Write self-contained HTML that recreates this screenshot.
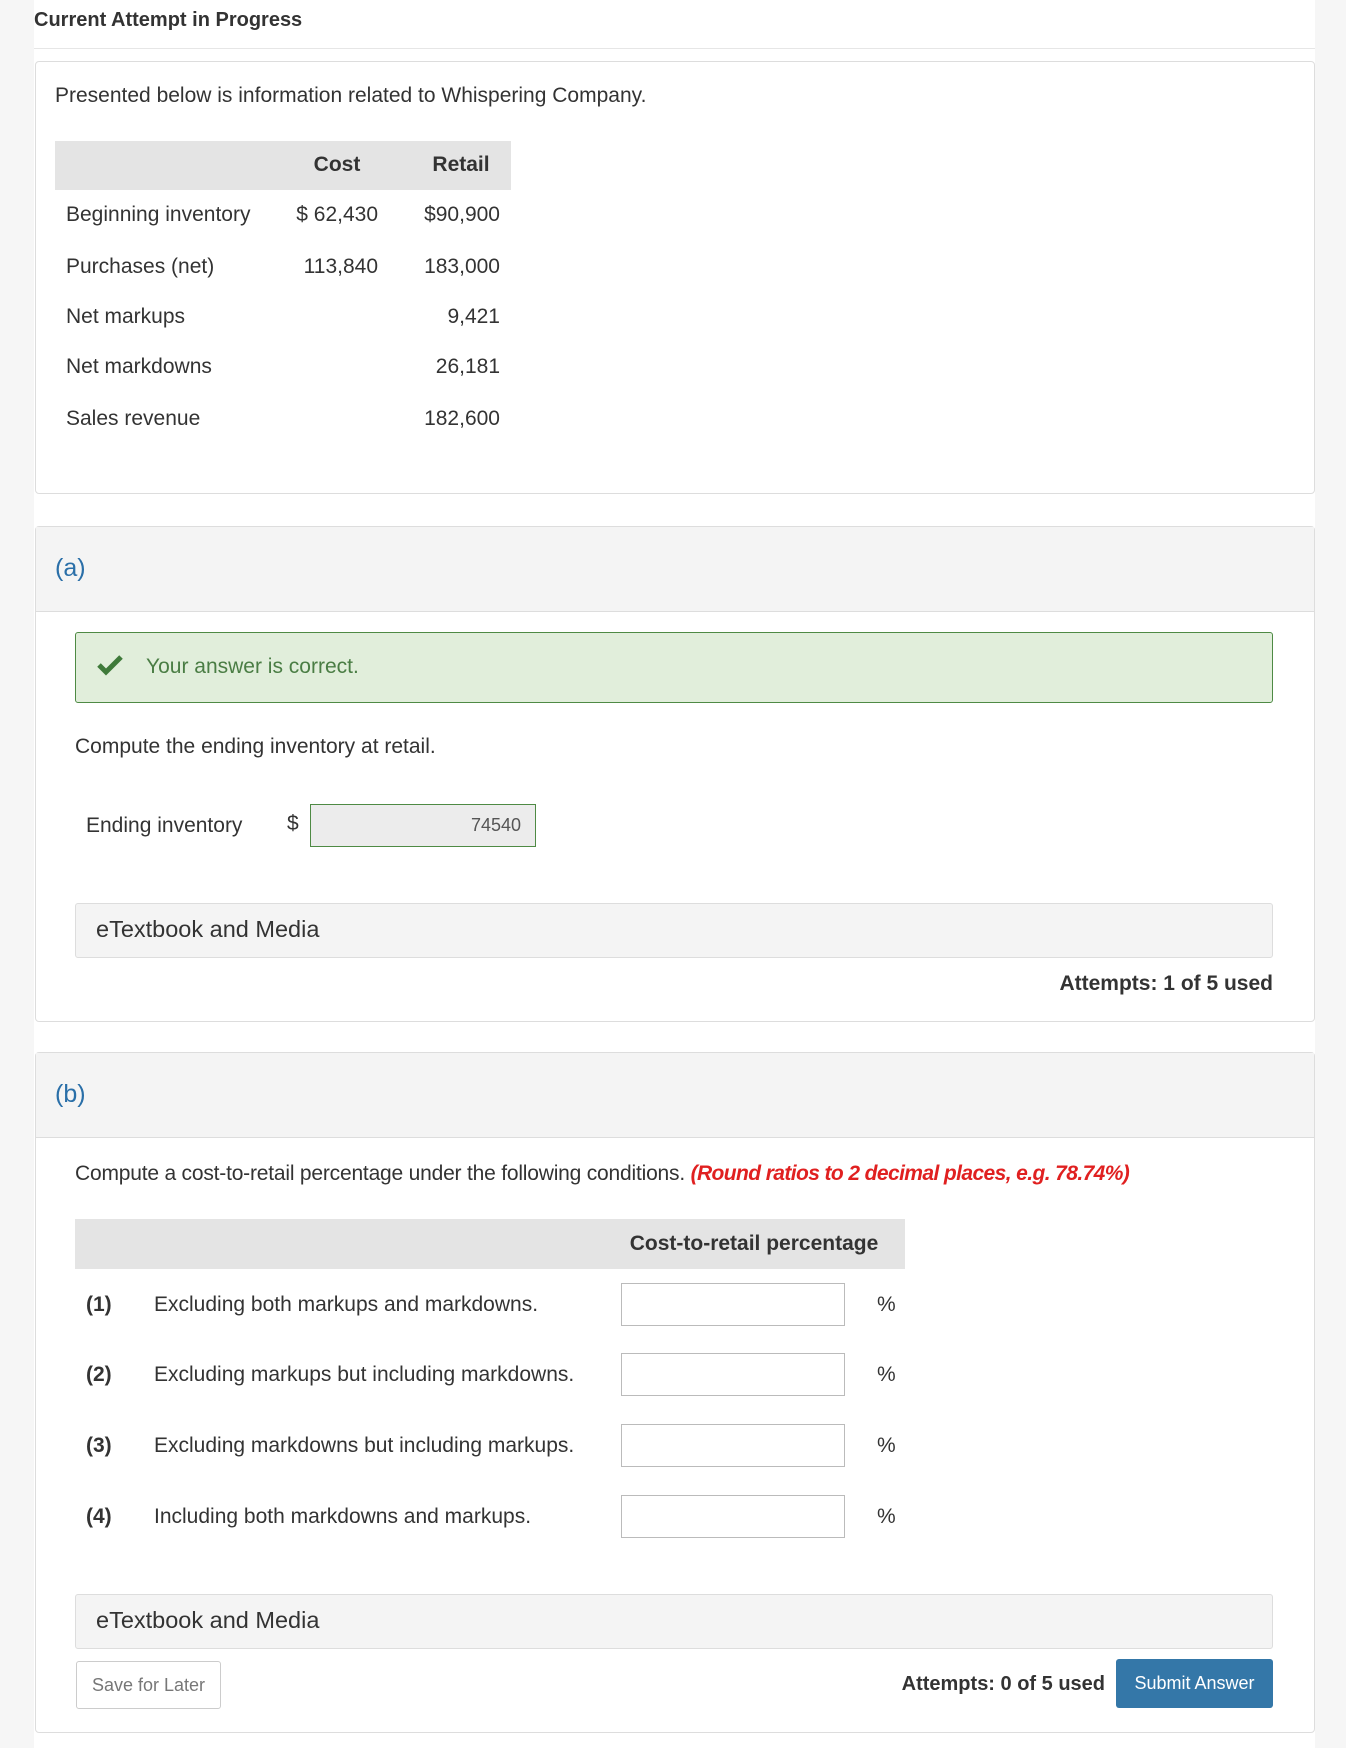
<!DOCTYPE html>
<html><head><meta charset="utf-8"><style>
*{box-sizing:border-box;margin:0;padding:0}
body{width:1346px;height:1748px;background:#f6f6f6;font-family:"Liberation Sans",sans-serif;color:#333;position:relative;overflow:hidden}
.a{position:absolute;white-space:nowrap}
.main{position:absolute;left:34px;top:0;width:1281px;height:1748px;background:#fff}
.panel{position:absolute;left:35px;width:1280px;border:1px solid #ddd;border-radius:4px;background:#fff}
.ph{position:absolute;left:0;top:0;right:0;background:#f4f4f4;border-bottom:1px solid #ddd}
.t{font-size:21px;line-height:24px}
.box{position:absolute;background:#f4f4f4;border:1px solid #ddd;border-radius:3px}
.inp{position:absolute;border:1px solid #bbb;background:#fff}
</style></head><body>
<div class="main"></div>
<div class="a" style="left:34px;top:9px;font-size:20px;font-weight:bold;color:#333">Current Attempt in Progress</div>
<div class="a" style="left:34px;top:48px;width:1281px;height:1px;background:#e6e6e6"></div>

<div class="panel" style="top:61px;height:433px"></div>
<div class="a t" style="left:55px;top:84px">Presented below is information related to Whispering Company.</div>
<div class="a" style="left:55px;top:141px;width:456px;height:49px;background:#e4e4e4"></div>
<div class="a t" style="left:337px;top:153px;font-weight:bold;transform:translateX(-50%)">Cost</div>
<div class="a t" style="left:461px;top:153px;font-weight:bold;transform:translateX(-50%)">Retail</div>
<div class="a t" style="left:66px;top:203px">Beginning inventory</div>
<div class="a t" style="left:66px;top:255px">Purchases (net)</div>
<div class="a t" style="left:66px;top:305px">Net markups</div>
<div class="a t" style="left:66px;top:355px">Net markdowns</div>
<div class="a t" style="left:66px;top:407px">Sales revenue</div>
<div class="a t" style="right:968px;top:203px">$ 62,430</div>
<div class="a t" style="right:968px;top:255px">113,840</div>
<div class="a t" style="right:846px;top:203px">$90,900</div>
<div class="a t" style="right:846px;top:255px">183,000</div>
<div class="a t" style="right:846px;top:305px">9,421</div>
<div class="a t" style="right:846px;top:355px">26,181</div>
<div class="a t" style="right:846px;top:407px">182,600</div>

<div class="panel" style="top:526px;height:496px"><div class="ph" style="height:85px"></div></div>
<div class="a" style="left:55px;top:554px;font-size:25px;color:#2a6fa8">(a)</div>
<div class="a" style="left:75px;top:632px;width:1198px;height:71px;background:#e1eedb;border:1px solid #4e8a44;border-radius:3px"></div>
<svg class="a" style="left:97px;top:654px" width="26" height="22" viewBox="0 0 26 22"><path d="M2 11 L9 18 L24 3" fill="none" stroke="#3f7a3a" stroke-width="5"/></svg>
<div class="a t" style="left:146px;top:655px;color:#4a7d44">Your answer is correct.</div>
<div class="a t" style="left:75px;top:735px">Compute the ending inventory at retail.</div>
<div class="a t" style="left:86px;top:814px">Ending inventory</div>
<div class="a t" style="left:287px;top:812px">$</div>
<div class="a" style="left:310px;top:804px;width:226px;height:43px;background:#ececec;border:1px solid #4e8a44"></div>
<div class="a" style="right:825px;top:815px;font-size:18px;color:#555">74540</div>
<div class="box" style="left:75px;top:903px;width:1198px;height:55px"></div>
<div class="a" style="left:96px;top:916px;font-size:23.5px;color:#333">eTextbook and Media</div>
<div class="a t" style="right:73px;top:972px;font-weight:bold">Attempts: 1 of 5 used</div>

<div class="panel" style="top:1052px;height:681px"><div class="ph" style="height:85px"></div></div>
<div class="a" style="left:55px;top:1080px;font-size:25px;color:#2a6fa8">(b)</div>
<div class="a t" style="left:75px;top:1162px;letter-spacing:-0.2px">Compute a cost-to-retail percentage under the following conditions. <span style="color:#e02020;font-weight:bold;font-style:italic;letter-spacing:-0.6px">(Round ratios to 2 decimal places, e.g. 78.74%)</span></div>
<div class="a" style="left:75px;top:1219px;width:830px;height:50px;background:#e4e4e4"></div>
<div class="a t" style="left:754px;top:1232px;font-weight:bold;transform:translateX(-50%)">Cost-to-retail percentage</div>

<div class="a t" style="left:86px;top:1293px;font-weight:bold">(1)</div>
<div class="a t" style="left:154px;top:1293px">Excluding both markups and markdowns.</div>
<div class="inp" style="left:621px;top:1283px;width:224px;height:43px"></div>
<div class="a t" style="left:877px;top:1293px">%</div>
<div class="a t" style="left:86px;top:1363px;font-weight:bold">(2)</div>
<div class="a t" style="left:154px;top:1363px">Excluding markups but including markdowns.</div>
<div class="inp" style="left:621px;top:1353px;width:224px;height:43px"></div>
<div class="a t" style="left:877px;top:1363px">%</div>
<div class="a t" style="left:86px;top:1434px;font-weight:bold">(3)</div>
<div class="a t" style="left:154px;top:1434px">Excluding markdowns but including markups.</div>
<div class="inp" style="left:621px;top:1424px;width:224px;height:43px"></div>
<div class="a t" style="left:877px;top:1434px">%</div>
<div class="a t" style="left:86px;top:1505px;font-weight:bold">(4)</div>
<div class="a t" style="left:154px;top:1505px">Including both markdowns and markups.</div>
<div class="inp" style="left:621px;top:1495px;width:224px;height:43px"></div>
<div class="a t" style="left:877px;top:1505px">%</div>

<div class="box" style="left:75px;top:1594px;width:1198px;height:55px"></div>
<div class="a" style="left:96px;top:1607px;font-size:23.5px;color:#333">eTextbook and Media</div>
<div class="a" style="left:76px;top:1661px;width:145px;height:48px;border:1px solid #ccc;border-radius:3px;background:#fff;font-size:18px;color:#777;text-align:center;line-height:46px">Save for Later</div>
<div class="a t" style="right:241px;top:1672px;font-weight:bold;font-size:20px">Attempts: 0 of 5 used</div>
<div class="a" style="left:1116px;top:1659px;width:157px;height:49px;background:#3477a8;border-radius:3px;color:#fff;font-size:18px;text-align:center;line-height:49px">Submit Answer</div>
</body></html>
